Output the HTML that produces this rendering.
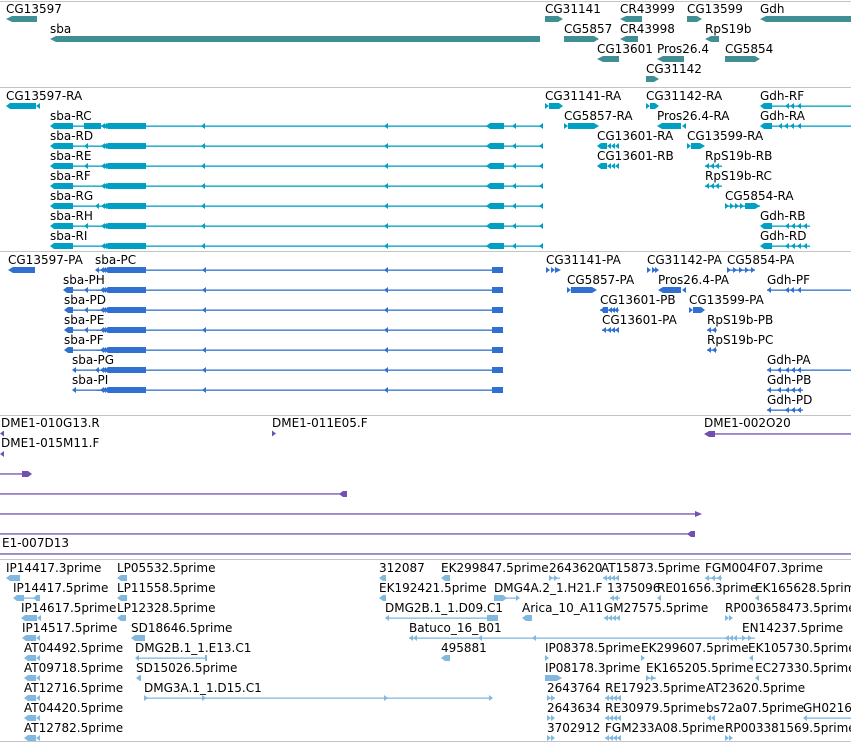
<!DOCTYPE html>
<html><head><meta charset="utf-8"><style>
html,body{margin:0;padding:0;background:#fff;}
svg{display:block;}
text{font-family:"DejaVu Sans","Liberation Sans",sans-serif;font-size:12px;fill:#000;}
</style></head><body>
<svg width="851" height="743" viewBox="0 0 851 743" xmlns="http://www.w3.org/2000/svg">
<defs>
<path id="tl" d="M0 0 L4 -3 L4 3 Z"/>
<path id="tr" d="M0 -3 L4 0 L0 3 Z"/>
<g id="sbaR" fill="#00a0c4">
 <rect x="52" y="-0.5" width="491" height="1.3"/>
 <path d="M50 0 L54 -3 L73 -3 L73 3 L54 3 Z"/>
 <path d="M104 0 L108 -3 L146 -3 L146 3 L108 3 Z"/>
 <use href="#tl" x="101"/><use href="#tl" x="103"/>
 <use href="#tl" x="201"/><use href="#tl" x="384"/>
 <path d="M486 0 L490 -3 L504 -3 L504 3 L490 3 Z"/>
 <use href="#tl" x="512"/><use href="#tl" x="539"/>
</g>
<g id="sbaP" fill="#3070d0">
 <rect x="96" y="-0.5" width="406" height="1.3"/>
 <path d="M104 0 L108 -3 L146 -3 L146 3 L108 3 Z"/>
 <use href="#tl" x="100"/><use href="#tl" x="102"/>
 <use href="#tl" x="202"/><use href="#tl" x="384"/>
 <path d="M495 0 L499 -3 L503 -3 L503 3 L499 3 Z"/>
 <rect x="492" y="-3" width="11" height="6"/>
</g>
</defs>
<g stroke="#c4c4c4" stroke-width="1">
<line x1="0" y1="1.5" x2="851" y2="1.5"/>
<line x1="0" y1="87.5" x2="851" y2="87.5"/>
<line x1="0" y1="251.5" x2="851" y2="251.5"/>
<line x1="0" y1="415.5" x2="851" y2="415.5"/>
<line x1="0" y1="559.5" x2="851" y2="559.5"/>
<line x1="0" y1="741.5" x2="851" y2="741.5"/>
</g>

<!-- Track 1 -->
<g fill="#408f94">
<path d="M6 19 L12 16 L37 16 L37 22 L12 22 Z"/>
<path d="M545 16 L558 16 L563 19 L558 22 L545 22 Z"/>
<path d="M620 19 L626 16 L642 16 L642 22 L626 22 Z"/>
<path d="M687 16 L697 16 L702 19 L697 22 L687 22 Z"/>
<path d="M760 19 L766 16 L851 16 L851 22 L766 22 Z"/>
<path d="M50 39 L56 36 L540 36 L540 42 L56 42 Z"/>
<path d="M564 36 L594 36 L599 39 L594 42 L564 42 Z"/>
<path d="M620 39 L626 36 L638 36 L638 42 L626 42 Z"/>
<path d="M705 39 L711 36 L719 36 L719 42 L711 42 Z"/>
<path d="M597 59 L603 56 L619 56 L619 62 L603 62 Z"/>
<path d="M657 59 L663 56 L684 56 L684 62 L663 62 Z"/>
<path d="M725 56 L755 56 L760 59 L755 62 L725 62 Z"/>
<path d="M646 76 L654 76 L659 79 L654 82 L646 82 Z"/>
</g>
<text x="6" y="13">CG13597</text>
<text x="545" y="13">CG31141</text>
<text x="620" y="13">CR43999</text>
<text x="687" y="13">CG13599</text>
<text x="760" y="13">Gdh</text>
<text x="50" y="33">sba</text>
<text x="564" y="33">CG5857</text>
<text x="620" y="33">CR43998</text>
<text x="705" y="33">RpS19b</text>
<text x="597" y="53">CG13601</text>
<text x="657" y="53">Pros26.4</text>
<text x="725" y="53">CG5854</text>
<text x="646" y="73">CG31142</text>

<!-- Track 2 -->
<g fill="#00a0c4">
<path d="M6 106 L10 103 L36 103 L36 109 L10 109 Z"/><use href="#tl" x="36" y="106"/>
<path d="M545 103 L549 106 L545 109 Z"/><rect x="549" y="103" width="10" height="6"/><path d="M559 103 L563 106 L559 109 Z"/>
<path d="M646 103 L650 106 L646 109 Z"/><rect x="650" y="103" width="5" height="6"/><path d="M655 103 L659 106 L655 109 Z"/>
<path d="M760 106 L764 103 L772 103 L772 109 L764 109 Z"/><rect x="772" y="105.5" width="79" height="1.3"/><use href="#tl" x="785" y="106"/><use href="#tl" x="790" y="106"/><use href="#tl" x="797" y="106"/>
<use href="#sbaR" y="126"/><use href="#sbaR" y="146"/><use href="#sbaR" y="166"/><use href="#sbaR" y="186"/><use href="#sbaR" y="206"/><use href="#sbaR" y="226"/><use href="#sbaR" y="246"/>
<rect x="84" y="123" width="17" height="6"/>
<use href="#tl" x="84" y="146"/><use href="#tl" x="84" y="166"/><use href="#tl" x="84" y="226"/><use href="#tl" x="95" y="206"/>
<path d="M564 123 L568 126 L564 129 Z"/><path d="M568 123 L594 123 L599 126 L594 129 L568 129 Z"/>
<path d="M657 126 L662 123 L681 123 L681 129 L662 129 Z"/><use href="#tl" x="682" y="126"/>
<path d="M760 126 L764 123 L772 123 L772 129 L764 129 Z"/><rect x="772" y="125.5" width="79" height="1.3"/><use href="#tl" x="778" y="126"/><use href="#tl" x="784" y="126"/><use href="#tl" x="790" y="126"/><use href="#tl" x="797" y="126"/>
<path d="M597 146 L601 143 L607 143 L607 149 L601 149 Z"/><use href="#tl" x="607" y="146"/><use href="#tl" x="611" y="146"/><use href="#tl" x="615" y="146"/>
<path d="M597 166 L601 163 L607 163 L607 169 L601 169 Z"/><use href="#tl" x="607" y="166"/><use href="#tl" x="611" y="166"/><use href="#tl" x="615" y="166"/>
<path d="M687 143 L691 146 L687 149 Z"/><path d="M691 143 L700 143 L705 146 L700 149 L691 149 Z"/>
<use href="#tl" x="705" y="166"/><use href="#tl" x="710" y="166"/><use href="#tl" x="715" y="166"/><rect x="705" y="165.5" width="17" height="1.3"/>
<use href="#tl" x="705" y="186"/><use href="#tl" x="710" y="186"/><use href="#tl" x="715" y="186"/><rect x="705" y="185.5" width="17" height="1.3"/>
<g transform="translate(725,206)"><path d="M0 -3 L4 0 L0 3 Z M5 -3 L9 0 L5 3 Z M10 -3 L14 0 L10 3 Z M15 -3 L19 0 L15 3 Z"/><path d="M20 -3 L30 -3 L35 0 L30 3 L20 3 Z"/><rect x="0" y="-0.5" width="35" height="1.3"/></g>
<g transform="translate(760,226)"><path d="M0 0 L4 -3 L12 -3 L12 3 L4 3 Z"/><rect x="12" y="-0.5" width="38" height="1.3"/><use href="#tl" x="25"/><use href="#tl" x="31"/><use href="#tl" x="37"/><use href="#tl" x="43"/></g>
<g transform="translate(760,246)"><path d="M0 0 L4 -3 L12 -3 L12 3 L4 3 Z"/><rect x="12" y="-0.5" width="38" height="1.3"/><use href="#tl" x="25"/><use href="#tl" x="31"/><use href="#tl" x="37"/><use href="#tl" x="43"/></g>
</g>
<text x="6" y="100">CG13597-RA</text>
<text x="545" y="100">CG31141-RA</text>
<text x="646" y="100">CG31142-RA</text>
<text x="760" y="100">Gdh-RF</text>
<text x="50" y="120">sba-RC</text>
<text x="564" y="120">CG5857-RA</text>
<text x="657" y="120">Pros26.4-RA</text>
<text x="760" y="120">Gdh-RA</text>
<text x="50" y="140">sba-RD</text>
<text x="597" y="140">CG13601-RA</text>
<text x="687" y="140">CG13599-RA</text>
<text x="50" y="160">sba-RE</text>
<text x="597" y="160">CG13601-RB</text>
<text x="705" y="160">RpS19b-RB</text>
<text x="50" y="180">sba-RF</text>
<text x="705" y="180">RpS19b-RC</text>
<text x="50" y="200">sba-RG</text>
<text x="725" y="200">CG5854-RA</text>
<text x="50" y="220">sba-RH</text>
<text x="760" y="220">Gdh-RB</text>
<text x="50" y="240">sba-RI</text>
<text x="760" y="240">Gdh-RD</text>

<!-- Track 3 -->
<g fill="#3070d0">
<path d="M8 270 L13 267 L35 267 L35 273 L13 273 Z"/>
<use href="#sbaP" y="270"/><use href="#sbaP" y="290"/><use href="#sbaP" y="310"/><use href="#sbaP" y="330"/><use href="#sbaP" y="350"/><use href="#sbaP" y="370"/><use href="#sbaP" y="390"/>
<use href="#tl" x="95" y="270"/>
<g transform="translate(0,290)"><rect x="66" y="-0.5" width="40" height="1.3"/><path d="M63 0 L67 -3 L73 -3 L73 3 L67 3 Z"/><use href="#tl" x="84"/></g>
<g transform="translate(0,310)"><rect x="66" y="-0.5" width="40" height="1.3"/><path d="M64 0 L68 -3 L73 -3 L73 3 L68 3 Z"/><use href="#tl" x="84"/></g>
<g transform="translate(0,330)"><rect x="66" y="-0.5" width="40" height="1.3"/><path d="M64 0 L68 -3 L73 -3 L73 3 L68 3 Z"/><use href="#tl" x="84"/></g>
<g transform="translate(0,350)"><rect x="66" y="-0.5" width="40" height="1.3"/><path d="M64 0 L68 -3 L73 -3 L73 3 L68 3 Z"/></g>
<g transform="translate(0,370)"><rect x="74" y="-0.5" width="32" height="1.3"/><use href="#tl" x="72"/><use href="#tl" x="95"/></g>
<g transform="translate(0,390)"><rect x="74" y="-0.5" width="32" height="1.3"/><use href="#tl" x="72"/></g>
<g transform="translate(546,270)"><use href="#tr" x="0"/><use href="#tr" x="5"/><path d="M9 -3 L15 0 L9 3 Z"/></g>
<g transform="translate(647,270)"><use href="#tr" x="0"/><use href="#tr" x="5"/><path d="M8 -3 L12 0 L8 3 Z"/></g>
<g transform="translate(727,270)"><use href="#tr" x="0"/><use href="#tr" x="6"/><use href="#tr" x="12"/><use href="#tr" x="18"/><use href="#tr" x="24"/><rect y="-0.5" width="28" height="1.3"/></g>
<path d="M567 287 L571 290 L567 293 Z"/><path d="M571 287 L592 287 L597 290 L592 293 L571 293 Z"/>
<path d="M658 290 L663 287 L681 287 L681 293 L663 293 Z"/><use href="#tl" x="682" y="290"/>
<g transform="translate(767,290)"><rect y="-0.5" width="84" height="1.3"/><use href="#tl" x="0"/><use href="#tl" x="18"/><use href="#tl" x="23"/><use href="#tl" x="30"/></g>
<g transform="translate(600,310)"><rect y="-0.5" width="19" height="1.3"/><use href="#tl" x="0"/><use href="#tl" x="8"/><use href="#tl" x="11"/><use href="#tl" x="14"/><rect x="3" y="-3" width="5" height="6"/></g>
<g transform="translate(689,310)"><use href="#tr" x="0"/><path d="M4 -3 L12 -3 L16 0 L12 3 L4 3 Z"/></g>
<g transform="translate(602,330)"><rect y="-0.5" width="17" height="1.3"/><use href="#tl" x="0"/><use href="#tl" x="5"/><use href="#tl" x="9"/><use href="#tl" x="13"/></g>
<g transform="translate(707,330)"><use href="#tl" x="0"/><use href="#tl" x="5"/><rect y="-0.5" width="10" height="1.3"/></g>
<g transform="translate(707,350)"><use href="#tl" x="0"/><use href="#tl" x="5"/><rect y="-0.5" width="10" height="1.3"/></g>
<g transform="translate(767,370)"><rect y="-0.5" width="84" height="1.3"/><use href="#tl" x="0"/><use href="#tl" x="10"/><use href="#tl" x="18"/><use href="#tl" x="24"/><use href="#tl" x="30"/></g>
<g transform="translate(767,390)"><rect y="-0.5" width="36" height="1.3"/><use href="#tl" x="0"/><use href="#tl" x="10"/><use href="#tl" x="18"/><use href="#tl" x="24"/><use href="#tl" x="30"/></g>
<g transform="translate(767,410)"><rect y="-0.5" width="36" height="1.3"/><use href="#tl" x="0"/><use href="#tl" x="18"/><use href="#tl" x="24"/><use href="#tl" x="30"/></g>
</g>
<text x="8" y="264">CG13597-PA</text>
<text x="95" y="264">sba-PC</text>
<text x="546" y="264">CG31141-PA</text>
<text x="647" y="264">CG31142-PA</text>
<text x="727" y="264">CG5854-PA</text>
<text x="63" y="284">sba-PH</text>
<text x="567" y="284">CG5857-PA</text>
<text x="658" y="284">Pros26.4-PA</text>
<text x="767" y="284">Gdh-PF</text>
<text x="64" y="304">sba-PD</text>
<text x="600" y="304">CG13601-PB</text>
<text x="689" y="304">CG13599-PA</text>
<text x="64" y="324">sba-PE</text>
<text x="602" y="324">CG13601-PA</text>
<text x="707" y="324">RpS19b-PB</text>
<text x="64" y="344">sba-PF</text>
<text x="707" y="344">RpS19b-PC</text>
<text x="72" y="364">sba-PG</text>
<text x="767" y="364">Gdh-PA</text>
<text x="72" y="384">sba-PI</text>
<text x="767" y="384">Gdh-PB</text>
<text x="767" y="404">Gdh-PD</text>

<!-- Track 4 -->
<g fill="#7050b0">
<path d="M0 433.5 L4 430.5 L4 436.5 Z"/>
<path d="M272 430.5 L276 433.5 L272 436.5 Z"/>
<path d="M704 434 L709 431 L715 431 L715 437 L709 437 Z"/><rect x="715" y="433.3" width="136" height="1.3"/>
<path d="M0 454 L4 451 L4 457 Z"/>
<rect x="0" y="473.3" width="24" height="1.3"/><path d="M22 471 L28 471 L32 474 L28 477 L22 477 Z"/>
<rect x="0" y="493.3" width="343" height="1.3"/><path d="M339 494 L343 491 L347 491 L347 497 L343 497 Z"/>
<rect x="0" y="513.3" width="697" height="1.3"/><path d="M695 511 L702 514 L695 517 Z"/>
<rect x="0" y="533.3" width="690" height="1.3"/><path d="M687 534 L691 531 L695 531 L695 537 L691 537 Z"/>
<rect x="0" y="553.3" width="851" height="1.3"/>
</g>
<text x="1" y="427">DME1-010G13.R</text>
<text x="272" y="427">DME1-011E05.F</text>
<text x="704" y="427">DME1-002O20</text>
<text x="1" y="447">DME1-015M11.F</text>
<text x="2" y="547">E1-007D13</text>

<!-- Track 5 -->
<g fill="#80b8e0">
<g transform="translate(0,578)">
<path d="M6 0 L10 -3 L20 -3 L20 3 L10 3 Z"/>
<path d="M117 0 L121 -3 L127 -3 L127 3 L121 3 Z"/>
<path d="M379 0 L383 -3 L386 -3 L386 3 L383 3 Z"/>
<path d="M441 0 L445 -3 L450 -3 L450 3 L445 3 Z"/>
<use href="#tr" x="549"/><use href="#tr" x="554"/><rect x="549" y="-0.5" width="11" height="1.3"/>
<use href="#tl" x="603"/><use href="#tl" x="607"/><use href="#tl" x="611"/><use href="#tl" x="615"/><rect x="603" y="-0.5" width="16" height="1.3"/>
<use href="#tl" x="705"/><use href="#tl" x="711"/><use href="#tl" x="717"/><rect x="705" y="-0.5" width="17" height="1.3"/>
</g>
<g transform="translate(0,598)">
<path d="M13 0 L17 -3 L24 -3 L24 3 L17 3 Z"/><rect x="24" y="-0.5" width="12" height="1.3"/><use href="#tl" x="33"/><rect x="36" y="-3" width="4" height="6"/>
<path d="M117 0 L121 -3 L127 -3 L127 3 L121 3 Z"/>
<path d="M379 0 L383 -3 L386 -3 L386 3 L383 3 Z"/>
<path d="M494 -3 L503 -3 L507 0 L503 3 L494 3 Z"/><rect x="503" y="-0.5" width="13" height="1.3"/><use href="#tr" x="516"/>
<use href="#tl" x="610"/><use href="#tl" x="614"/><rect x="610" y="-0.5" width="10" height="1.3"/>
<use href="#tl" x="657"/><use href="#tl" x="755"/>
</g>
<g transform="translate(0,618)">
<path d="M21 0 L25 -3 L37 -3 L37 3 L25 3 Z"/><use href="#tl" x="37"/>
<path d="M117 0 L121 -3 L126 -3 L126 3 L121 3 Z"/>
<use href="#tl" x="385"/><rect x="387" y="-0.5" width="100" height="1.3"/><rect x="487" y="-3" width="11" height="6"/>
<path d="M522 0 L526 -3 L532 -3 L532 3 L526 3 Z"/>
<use href="#tl" x="604"/><use href="#tl" x="608"/><use href="#tl" x="612"/><use href="#tl" x="616"/><rect x="604" y="-0.5" width="16" height="1.3"/>
<use href="#tr" x="725"/><use href="#tr" x="729"/>
</g>
<g transform="translate(0,638)">
<path d="M22 0 L26 -3 L36 -3 L36 3 L26 3 Z"/><use href="#tl" x="36"/>
<path d="M131 0 L135 -3 L145 -3 L145 3 L135 3 Z"/>
<rect x="409" y="-0.5" width="346" height="1.3"/><use href="#tl" x="409"/><use href="#tl" x="413"/><use href="#tl" x="478"/><use href="#tl" x="532"/><use href="#tl" x="725"/><use href="#tl" x="729"/><use href="#tl" x="733"/><use href="#tr" x="742"/><use href="#tr" x="748"/>
</g>
<g transform="translate(0,658)">
<path d="M24 0 L28 -3 L36 -3 L36 3 L28 3 Z"/><use href="#tl" x="36"/>
<use href="#tl" x="135"/><rect x="137" y="-0.5" width="70" height="1.3"/><rect x="205" y="-3" width="2" height="6"/>
<path d="M441 0 L445 -3 L450 -3 L450 3 L445 3 Z"/>
<use href="#tr" x="545"/><use href="#tr" x="641"/><use href="#tl" x="749"/>
</g>
<g transform="translate(0,678)">
<path d="M24 0 L28 -3 L36 -3 L36 3 L28 3 Z"/><use href="#tl" x="36"/>
<path d="M136 0 L140 -3 L141 -3 L141 3 L140 3 Z"/>
<path d="M545 -3 L557 -3 L562 0 L557 3 L545 3 Z"/>
<use href="#tr" x="646"/><use href="#tr" x="651"/><rect x="646" y="-0.5" width="10" height="1.3"/>
<use href="#tl" x="755"/>
</g>
<g transform="translate(0,698)">
<path d="M24 0 L28 -3 L36 -3 L36 3 L28 3 Z"/><use href="#tl" x="36"/>
<rect x="144" y="-0.5" width="345" height="1.3"/><use href="#tr" x="144"/><use href="#tr" x="202"/><use href="#tr" x="384"/><use href="#tr" x="489"/>
<use href="#tr" x="547"/><use href="#tr" x="551"/><rect x="547" y="-0.5" width="8" height="1.3"/>
<use href="#tl" x="605"/><use href="#tl" x="609"/><use href="#tl" x="613"/><use href="#tl" x="617"/><rect x="605" y="-0.5" width="16" height="1.3"/>
</g>
<g transform="translate(0,718)">
<path d="M24 0 L28 -3 L36 -3 L36 3 L28 3 Z"/><use href="#tl" x="36"/>
<use href="#tr" x="547"/><use href="#tr" x="551"/>
<use href="#tl" x="605"/><use href="#tl" x="609"/><use href="#tl" x="613"/><use href="#tl" x="617"/><rect x="605" y="-0.5" width="16" height="1.3"/>
<use href="#tl" x="707"/><use href="#tl" x="711"/>
<use href="#tl" x="803"/><rect x="805" y="-0.5" width="46" height="1.3"/>
</g>
<g transform="translate(0,738)">
<path d="M24 0 L28 -3 L36 -3 L36 3 L28 3 Z"/><use href="#tl" x="36"/>
<use href="#tr" x="547"/><use href="#tr" x="551"/>
<use href="#tl" x="605"/><use href="#tl" x="609"/><use href="#tl" x="613"/><use href="#tl" x="617"/><rect x="605" y="-0.5" width="16" height="1.3"/>
<use href="#tr" x="725"/><use href="#tr" x="729"/>
</g>
</g>
<text x="6" y="572">IP14417.3prime</text>
<text x="117" y="572">LP05532.5prime</text>
<text x="379" y="572">312087</text>
<text x="441" y="572">EK299847.5prime</text>
<text x="549" y="572">2643620</text>
<text x="601" y="572">AT15873.5prime</text>
<text x="705" y="572">FGM004F07.3prime</text>
<text x="13" y="592">IP14417.5prime</text>
<text x="117" y="592">LP11558.5prime</text>
<text x="379" y="592">EK192421.5prime</text>
<text x="494" y="592">DMG4A.2_1.H21.F</text>
<text x="607" y="592">1375096</text>
<text x="657" y="592">RE01656.3prime</text>
<text x="755" y="592">EK165628.5prime</text>
<text x="21" y="612">IP14617.5prime</text>
<text x="117" y="612">LP12328.5prime</text>
<text x="385" y="612">DMG2B.1_1.D09.C1</text>
<text x="522" y="612">Arica_10_A11</text>
<text x="604" y="612">GM27575.5prime</text>
<text x="725" y="612">RP003658473.5prime</text>
<text x="22" y="632">IP14517.5prime</text>
<text x="131" y="632">SD18646.5prime</text>
<text x="409" y="632">Batuco_16_B01</text>
<text x="742" y="632">EN14237.5prime</text>
<text x="24" y="652">AT04492.5prime</text>
<text x="135" y="652">DMG2B.1_1.E13.C1</text>
<text x="441" y="652">495881</text>
<text x="545" y="652">IP08378.5prime</text>
<text x="641" y="652">EK299607.5prime</text>
<text x="748" y="652">EK105730.5prime</text>
<text x="24" y="672">AT09718.5prime</text>
<text x="136" y="672">SD15026.5prime</text>
<text x="545" y="672">IP08178.3prime</text>
<text x="646" y="672">EK165205.5prime</text>
<text x="755" y="672">EC27330.5prime</text>
<text x="24" y="692">AT12716.5prime</text>
<text x="144" y="692">DMG3A.1_1.D15.C1</text>
<text x="547" y="692">2643764</text>
<text x="605" y="692">RE17923.5prime</text>
<text x="706" y="692">AT23620.5prime</text>
<text x="24" y="712">AT04420.5prime</text>
<text x="547" y="712">2643634</text>
<text x="605" y="712">RE30979.5prime</text>
<text x="706" y="712">bs72a07.5prime</text>
<text x="803" y="712">GH02163</text>
<text x="24" y="732">AT12782.5prime</text>
<text x="547" y="732">3702912</text>
<text x="605" y="732">FGM233A08.5prime</text>
<text x="725" y="732">RP003381569.5prime</text>
</svg>
</body></html>
